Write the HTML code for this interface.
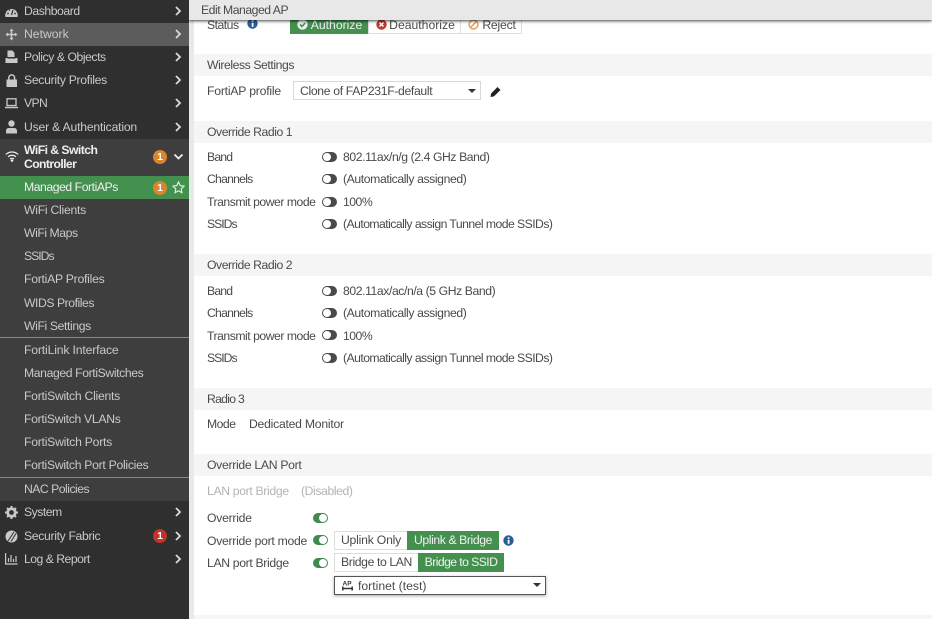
<!DOCTYPE html>
<html><head><meta charset="utf-8"><style>
html,body{margin:0;padding:0;width:932px;height:619px;overflow:hidden;background:#fff;font-family:"Liberation Sans",sans-serif;font-size:12.2px;color:#4a4a4a}
.a{position:absolute}
.t{position:absolute;white-space:nowrap;line-height:17px;height:17px}
.n{color:#c9c9c9;left:24px}
.h{position:absolute;left:194px;width:738px;height:22px;background:#f5f5f5}
.bd{position:absolute;width:14px;height:14px;border-radius:50%;color:#fff;font-size:10.5px;font-weight:bold;line-height:14px;text-align:center}
.tg{position:absolute;width:15px;height:10px;border-radius:5px;background:#4a4a4a;left:322px}
.tg:before{content:"";position:absolute;left:1px;top:1px;width:8px;height:8px;background:#fff;border-radius:50%}
.tg.on{background:#3f8a4f;left:313px}
.tg.on:before{left:6px}
.btn{position:absolute;height:18px;line-height:18px;box-sizing:border-box;white-space:nowrap;text-align:center}
.w{background:#fff;border:1px solid #ddd;line-height:16px}
.g{background:#43904f;color:#f2f2f2}
.ic{position:absolute;overflow:visible}
</style></head><body>

<!-- content bg -->
<div class="a" style="left:189px;top:0;width:5px;height:619px;background:#e9e9e9"></div>
<div class="h" style="top:54px"></div>
<div class="h" style="top:121px"></div>
<div class="h" style="top:254px"></div>
<div class="h" style="top:388px"></div>
<div class="h" style="top:454px"></div>
<div class="h" style="top:615px;height:4px"></div>

<!-- status row -->
<div class="t" style="left:207px;top:17px;letter-spacing:-.5px">Status</div>
<svg class="ic" style="left:247px;top:18px" width="11" height="11"><circle cx="5.5" cy="5.5" r="5.2" fill="#2a5c9a"/><rect x="4.7" y="4.8" width="1.8" height="4" fill="#fff"/><rect x="4.7" y="2.3" width="1.8" height="1.6" fill="#fff"/></svg>
<div class="btn g" style="left:290px;top:16px;width:78px;height:18px;padding-left:15px">Authorize</div>
<svg class="ic" style="left:297px;top:19px" width="11" height="11"><circle cx="5.5" cy="5.5" r="5.2" fill="#eee"/><path d="M3 5.5l2 2 3.2-3.6" stroke="#43904f" stroke-width="1.6" fill="none"/></svg>
<div class="btn w" style="left:368px;top:16px;width:93px;padding-left:15px;height:18px">Deauthorize</div>
<svg class="ic" style="left:376px;top:19px" width="11" height="11"><circle cx="5.5" cy="5.5" r="5.2" fill="#c0392b"/><path d="M3.5 3.5l4 4M7.5 3.5l-4 4" stroke="#fff" stroke-width="1.5"/></svg>
<div class="btn w" style="left:460px;top:16px;width:62px;padding-left:16px;height:18px;letter-spacing:-.2px">Reject</div>
<svg class="ic" style="left:468px;top:19px" width="11" height="11"><circle cx="5.5" cy="5.5" r="4.4" fill="none" stroke="#e0a060" stroke-width="1.5"/><path d="M2.500 8.500l6-6" stroke="#e0a060" stroke-width="1.5"/></svg>

<!-- title bar -->
<div class="a" style="left:189px;top:0;width:743px;height:20px;background:#e8e8e8;box-shadow:0 1px 3px rgba(0,0,0,.75)"></div>
<div class="t" style="left:201px;top:2px;letter-spacing:-.47px">Edit Managed AP</div>

<!-- wireless -->
<div class="t" style="left:207px;top:57px;letter-spacing:-.42px">Wireless Settings</div>
<div class="t" style="left:207px;top:83px;letter-spacing:-.2px">FortiAP profile</div>
<div class="a" style="left:293px;top:81px;width:188px;height:19px;box-sizing:border-box;border:1px solid #d8d8d8;background:#fff"></div>
<div class="t" style="left:300px;top:83px;letter-spacing:-.33px">Clone of FAP231F-default</div>
<div class="a" style="left:468px;top:89px;width:0;height:0;border:4px solid transparent;border-top:4px solid #333;border-bottom:0"></div>
<svg class="ic" style="left:490px;top:86px" width="11" height="11"><path d="M.5 11l.6-3.500L7.500 1l3 3L4 10.400z" fill="#222"/></svg>

<!-- radio 1 -->
<div class="t" style="left:207px;top:124px;letter-spacing:-.44px">Override Radio 1</div>
<div class="t" style="left:207px;top:149px;letter-spacing:-.8px">Band</div><div class="tg" style="top:152px"></div><div class="t" style="left:343px;top:149px;letter-spacing:-.41px">802.11ax/n/g (2.4 GHz Band)</div>
<div class="t" style="left:207px;top:171px;letter-spacing:-.75px">Channels</div><div class="tg" style="top:174px"></div><div class="t" style="left:343px;top:171px;letter-spacing:-.39px">(Automatically assigned)</div>
<div class="t" style="left:207px;top:194px;letter-spacing:-.47px">Transmit power mode</div><div class="tg" style="top:197px"></div><div class="t" style="left:343px;top:194px;letter-spacing:-.5px">100%</div>
<div class="t" style="left:207px;top:216px;letter-spacing:-1px">SSIDs</div><div class="tg" style="top:219px"></div><div class="t" style="left:343px;top:216px;letter-spacing:-.54px">(Automatically assign Tunnel mode SSIDs)</div>

<!-- radio 2 -->
<div class="t" style="left:207px;top:257px;letter-spacing:-.44px">Override Radio 2</div>
<div class="t" style="left:207px;top:283px;letter-spacing:-.8px">Band</div><div class="tg" style="top:286px"></div><div class="t" style="left:343px;top:283px;letter-spacing:-.41px">802.11ax/ac/n/a (5 GHz Band)</div>
<div class="t" style="left:207px;top:305px;letter-spacing:-.75px">Channels</div><div class="tg" style="top:308px"></div><div class="t" style="left:343px;top:305px;letter-spacing:-.39px">(Automatically assigned)</div>
<div class="t" style="left:207px;top:328px;letter-spacing:-.47px">Transmit power mode</div><div class="tg" style="top:330px"></div><div class="t" style="left:343px;top:328px;letter-spacing:-.5px">100%</div>
<div class="t" style="left:207px;top:350px;letter-spacing:-1px">SSIDs</div><div class="tg" style="top:353px"></div><div class="t" style="left:343px;top:350px;letter-spacing:-.54px">(Automatically assign Tunnel mode SSIDs)</div>

<!-- radio 3 -->
<div class="t" style="left:207px;top:391px;letter-spacing:-.7px">Radio 3</div>
<div class="t" style="left:207px;top:416px;letter-spacing:-.5px">Mode</div><div class="t" style="left:249px;top:416px;letter-spacing:-.24px">Dedicated Monitor</div>

<!-- LAN -->
<div class="t" style="left:207px;top:457px;letter-spacing:-.3px">Override LAN Port</div>
<div class="t" style="left:207px;top:483px;color:#b4b4b4;letter-spacing:-.33px">LAN port Bridge</div><div class="t" style="left:301px;top:483px;color:#b4b4b4;letter-spacing:-.4px">(Disabled)</div>
<div class="t" style="left:207px;top:510px;letter-spacing:-.25px">Override</div><div class="tg on" style="top:513px"></div>
<div class="t" style="left:207px;top:533px;letter-spacing:-.28px">Override port mode</div><div class="tg on" style="top:535px"></div>
<div class="btn w" style="left:334px;top:531px;width:74px;height:19px;letter-spacing:-.2px">Uplink Only</div>
<div class="btn g" style="left:407px;top:531px;width:92px;height:19px;line-height:19px;letter-spacing:-.4px">Uplink &amp; Bridge</div>
<svg class="ic" style="left:503px;top:535px" width="11" height="11"><circle cx="5.5" cy="5.5" r="5.2" fill="#2a5c9a"/><rect x="4.7" y="4.8" width="1.8" height="4" fill="#fff"/><rect x="4.7" y="2.3" width="1.8" height="1.6" fill="#fff"/></svg>
<div class="t" style="left:207px;top:555px;letter-spacing:-.33px">LAN port Bridge</div><div class="tg on" style="top:558px"></div>
<div class="btn w" style="left:334px;top:553px;width:85px;height:19px;letter-spacing:-.38px">Bridge to LAN</div>
<div class="btn g" style="left:418px;top:553px;width:86px;height:19px;line-height:19px;letter-spacing:-.57px">Bridge to SSID</div>
<div class="a" style="left:334px;top:576px;width:212px;height:19px;box-sizing:border-box;border:1px solid #555;background:#fff;box-shadow:0 1px 3px rgba(0,0,0,.35)"></div>
<svg class="ic" style="left:342px;top:580px" width="11" height="11"><text x=".5" y="5.500" font-size="6.500" font-weight="bold" fill="#333" font-family="Liberation Sans">AP</text><path d="M.8 6.500v4M10.200 6.500v4M.8 8.500h9.400" stroke="#333" stroke-width="1.500"/></svg>
<div class="t" style="left:358px;top:578px">fortinet (test)</div>
<div class="a" style="left:533px;top:583px;width:0;height:0;border:4px solid transparent;border-top:4px solid #333;border-bottom:0"></div>

<!-- sidebar -->
<div class="a" style="left:0;top:0;width:189px;height:619px;background:#2f2f2f"></div>
<div class="a" style="left:0;top:23px;width:189px;height:23px;background:#5c5c5c"></div>
<div class="a" style="left:0;top:139px;width:189px;height:338px;background:#3e3e3e"></div>
<div class="a" style="left:0;top:176px;width:189px;height:23px;background:#43904f"></div>
<div class="a" style="left:0;top:337px;width:189px;height:1px;background:#888"></div>
<div class="a" style="left:0;top:477px;width:189px;height:1px;background:#888"></div>
<div class="a" style="left:0;top:478px;width:189px;height:23px;background:#3e3e3e"></div>

<div class="t n" style="top:3px;letter-spacing:-.44px">Dashboard</div>
<div class="t n" style="top:26px">Network</div>
<div class="t n" style="top:49px;letter-spacing:-.44px">Policy &amp; Objects</div>
<div class="t n" style="top:72px;letter-spacing:-.3px">Security Profiles</div>
<div class="t n" style="top:95px;letter-spacing:-.6px">VPN</div>
<div class="t n" style="top:119px;letter-spacing:-.2px">User &amp; Authentication</div>
<div class="t n" style="top:142px;color:#eee;font-weight:bold;letter-spacing:-.54px">WiFi &amp; Switch</div>
<div class="t n" style="top:156px;color:#eee;font-weight:bold;letter-spacing:-.6px">Controller</div>
<div class="t n" style="top:179px;color:#f0f0f0;letter-spacing:-.44px">Managed FortiAPs</div>
<div class="t n" style="top:202px;letter-spacing:-.25px">WiFi Clients</div>
<div class="t n" style="top:225px;letter-spacing:-.44px">WiFi Maps</div>
<div class="t n" style="top:248px;letter-spacing:-1px">SSIDs</div>
<div class="t n" style="top:271px;letter-spacing:-.25px">FortiAP Profiles</div>
<div class="t n" style="top:295px;letter-spacing:-.45px">WIDS Profiles</div>
<div class="t n" style="top:318px;letter-spacing:-.38px">WiFi Settings</div>
<div class="t n" style="top:342px;letter-spacing:-.16px">FortiLink Interface</div>
<div class="t n" style="top:365px;letter-spacing:-.38px">Managed FortiSwitches</div>
<div class="t n" style="top:388px;letter-spacing:-.26px">FortiSwitch Clients</div>
<div class="t n" style="top:411px;letter-spacing:-.3px">FortiSwitch VLANs</div>
<div class="t n" style="top:434px;letter-spacing:-.24px">FortiSwitch Ports</div>
<div class="t n" style="top:457px;letter-spacing:-.28px">FortiSwitch Port Policies</div>
<div class="t n" style="top:481px;letter-spacing:-.5px">NAC Policies</div>
<div class="t n" style="top:504px;letter-spacing:-.5px">System</div>
<div class="t n" style="top:528px;letter-spacing:-.33px">Security Fabric</div>
<div class="t n" style="top:551px;letter-spacing:-.5px">Log &amp; Report</div>

<!-- chevrons -->
<svg class="ic" style="left:0;top:0" width="189" height="619" fill="none" stroke="#d8d8d8" stroke-width="1.8">
<path d="M176 7l4 4-4 4M176 30l4 4-4 4M176 53l4 4-4 4M176 76l4 4-4 4M176 99l4 4-4 4M176 123l4 4-4 4M176 508l4 4-4 4M176 532l4 4-4 4M176 555l4 4-4 4"/>
<path d="M174.500 154.500l4 4 4-4" stroke="#eee"/>
</svg>

<!-- badges -->
<div class="bd" style="left:153px;top:150px;background:#d9862a">1</div>
<div class="bd" style="left:153px;top:181px;background:#d9862a">1</div>
<div class="bd" style="left:153px;top:529px;background:#c0332b">1</div>
<svg class="ic" style="left:172px;top:181px" width="13" height="13"><path d="M6.500 1l1.700 3.600 3.800.5-2.800 2.700.7 3.900-3.400-1.900-3.400 1.900.7-3.900L1 5.100l3.800-.5z" fill="none" stroke="#f0f0f0" stroke-width="1.100"/></svg>

<!-- menu icons -->
<svg class="ic" style="left:5px;top:5px" width="13" height="13"><path d="M.5 12a6 6 0 0 1 0-3.500 6.200 6.200 0 0 1 12 0 6 6 0 0 1 0 3.500z" fill="#c9c9c9"/><path d="M6.500 10l1.500-5" stroke="#2f2f2f" stroke-width="1.200"/><circle cx="3" cy="8.500" r=".9" fill="#2f2f2f"/><circle cx="10" cy="8.500" r=".9" fill="#2f2f2f"/><circle cx="4.500" cy="5" r=".8" fill="#2f2f2f"/></svg>
<svg class="ic" style="left:5px;top:28px" width="13" height="13"><path d="M6.500.5l2 2.500H7.300v2.700H10V4.500l2.500 2-2.500 2V7.300H7.300V10h1.200l-2 2.500-2-2.500h1.200V7.300H3v1.200L.5 6.500l2.500-2v1.200h2.700V3H4.500z" fill="#c9c9c9"/></svg>
<svg class="ic" style="left:5px;top:50px" width="13" height="14"><path d="M2.500.5h5l2 2.500v4h-7z" fill="#c9c9c9"/><path d="M.5 8h12v5H.5z" fill="#c9c9c9"/><path d="M2.500 8h8" stroke="#2f2f2f"/></svg>
<svg class="ic" style="left:6px;top:74px" width="11" height="13"><rect x=".5" y="5.500" width="10.500" height="7.500" fill="#c9c9c9"/><path d="M2.800 6V3.800a2.900 2.900 0 0 1 5.800 0V6" fill="none" stroke="#c9c9c9" stroke-width="1.500"/></svg>
<svg class="ic" style="left:5px;top:98px" width="13" height="11"><rect x="2" y=".8" width="9" height="6.700" fill="none" stroke="#c9c9c9" stroke-width="1.300"/><path d="M0 9.500h13" stroke="#c9c9c9" stroke-width="1.500"/></svg>
<svg class="ic" style="left:5px;top:120px" width="13" height="14"><circle cx="6.500" cy="3.500" r="3.200" fill="#c9c9c9"/><path d="M1 13.500V10.500a3 3 0 0 1 3-2.500h5a3 3 0 0 1 3 2.500v3z" fill="#c9c9c9"/></svg>
<svg class="ic" style="left:5px;top:150px" width="14" height="12" fill="none" stroke="#eee" stroke-width="1.200"><path d="M.8 4.500a9 9 0 0 1 12.400 0M3 6.800a6 6 0 0 1 8 0M5 9a3 3 0 0 1 4 0"/><circle cx="7" cy="10.500" r=".7" fill="#eee"/></svg>
<svg class="ic" style="left:5px;top:506px" width="13" height="13"><circle cx="6.500" cy="6.500" r="3.800" fill="none" stroke="#c9c9c9" stroke-width="2.800"/><path d="M6.500 0v13M0 6.500h13M2 2l9 9M11 2l-9 9" stroke="#c9c9c9" stroke-width="2" stroke-dasharray="2 9"/></svg>
<svg class="ic" style="left:5px;top:530px" width="13" height="13"><circle cx="6.500" cy="6.500" r="6" fill="#c9c9c9"/><path d="M3 11l6-9M6 11.500l5-8" stroke="#2f2f2f" stroke-width="1"/></svg>
<svg class="ic" style="left:5px;top:553px" width="13" height="12" fill="none" stroke="#c9c9c9" stroke-width="1.200"><path d="M.6 0v11h12M3.500 9V5M6 9V2M8.500 9V6M11 9V3"/></svg>
</body></html>
